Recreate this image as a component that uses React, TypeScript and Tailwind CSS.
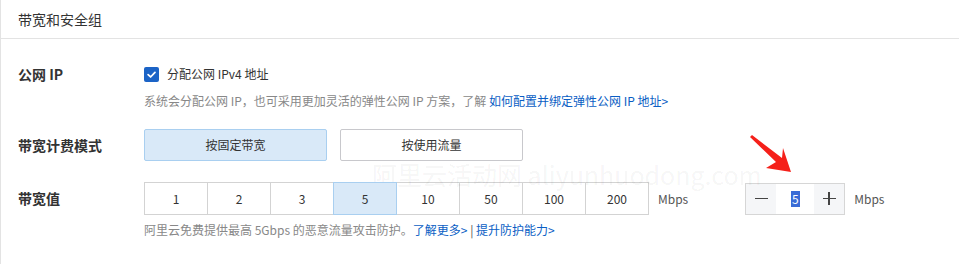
const font = { fontFamily: '"Noto Sans CJK SC", "Noto Sans", sans-serif' };

const bandwidths = ['1', '2', '3', '5', '10', '50', '100', '200'];

function Checkbox() {
  return (
    <span className="flex h-[15px] w-[15px] items-center justify-center rounded-[2px] bg-[#1b63c6]">
      <svg width="11" height="11" viewBox="0 0 12 12" fill="none">
        <path d="M2.3 6.2 L5 8.7 L9.8 3.6" stroke="white" strokeWidth="1.9" strokeLinecap="round" strokeLinejoin="round" />
      </svg>
    </span>
  );
}

function Arrow() {
  return (
    <svg className="absolute left-[748px] top-[134px]" width="46" height="42" viewBox="0 0 46 42">
      <path d="M2 3 L4 1 L34 24 L35 14 L43 38 L18 34 L28 28 Z" fill="#f5201a" />
    </svg>
  );
}

export default function App() {
  return (
    <div className="relative h-[264px] w-[959px] overflow-hidden bg-white text-[#333]" style={font}>
      <div className="h-full border-l border-[#e3e3e3]">
        <div className="flex h-[39px] items-center border-b border-[#e3e3e3] pl-[17px] text-[14px] text-[#333]">
          带宽和安全组
        </div>

        <div className="mt-[25px] flex">
          <div className="w-[143px] pl-[17px] text-[14px] font-bold leading-[20px]">公网 IP</div>
          <div>
            <label className="flex h-[20px] items-center gap-[8px] text-[12px] leading-[20px] text-[#333]">
              <Checkbox />
              分配公网 IPv4 地址
            </label>
            <p className="mt-[8px] text-[12px] leading-[18px] text-[#888]">
              系统会分配公网 IP，也可采用更加灵活的弹性公网 IP 方案，了解{' '}
              <span className="text-[#0a5ec4]">如何配置并绑定弹性公网 IP 地址&gt;</span>
            </p>
          </div>
        </div>

        <div className="mt-[19px] flex items-center">
          <div className="w-[143px] pl-[17px] text-[14px] font-bold">带宽计费模式</div>
          <div className="flex gap-[13px]">
            <button className="h-[32px] w-[183px] rounded-[2px] border border-[#a9cff0] bg-[#d9e9f8] text-[12px] text-[#333]">
              按固定带宽
            </button>
            <button className="h-[32px] w-[183px] rounded-[2px] border border-[#c8c8cc] bg-white text-[12px] text-[#333]">
              按使用流量
            </button>
          </div>
        </div>

        <div className="mt-[21px] flex">
          <div className="flex h-[33px] w-[143px] items-center pl-[17px] text-[14px] font-bold">带宽值</div>
          <div>
            <div className="flex items-center">
              <div className="flex">
                {bandwidths.map((b, i) => (
                  <div
                    key={b}
                    className={
                      b === '5'
                        ? 'relative z-10 -ml-px flex h-[33px] w-[64px] items-center justify-center border border-[#a9cff0] bg-[#d9e9f8] text-[12px]'
                        : i === 0
                          ? 'flex h-[33px] w-[64px] items-center justify-center border border-[#d3d3d3] text-[12px]'
                          : '-ml-px flex h-[33px] w-[64px] items-center justify-center border border-[#d3d3d3] text-[12px]'
                    }
                  >
                    {b}
                  </div>
                ))}
              </div>
              <span className="ml-[9px] text-[12px] text-[#555]">Mbps</span>

              <div className="ml-[57px] flex h-[32px] w-[100px] border border-[#d6d6d6]">
                <div className="flex w-[30px] items-center justify-center bg-[#f5f6f8]">
                  <span className="block h-[1.5px] w-[13px] bg-[#444]" />
                </div>
                <div className="flex flex-1 items-center justify-center bg-white text-[12px]">
                  <span className="bg-[#3a6cd6] px-px leading-[16px] text-white">5</span>
                </div>
                <div className="relative flex w-[30px] items-center justify-center bg-[#f5f6f8]">
                  <span className="block h-[1.5px] w-[13px] bg-[#444]" />
                  <span className="absolute block h-[13px] w-[1.5px] bg-[#444]" />
                </div>
              </div>
              <span className="ml-[9px] text-[12px] text-[#555]">Mbps</span>
            </div>
            <p className="mt-[6px] text-[12px] leading-[18px] text-[#888]">
              阿里云免费提供最高 5Gbps 的恶意流量攻击防护。
              <span className="text-[#0a5ec4]">了解更多&gt;</span>
              <span className="text-[#555]"> | </span>
              <span className="text-[#0a5ec4]">提升防护能力&gt;</span>
            </p>
          </div>
        </div>
      </div>

      <div className="pointer-events-none absolute left-[372px] top-[161px] whitespace-nowrap text-[25px] leading-[26px] text-[#000]/[0.05]">
        阿里云活动网 aliyunhuodong.com
      </div>
      <Arrow />
    </div>
  );
}
